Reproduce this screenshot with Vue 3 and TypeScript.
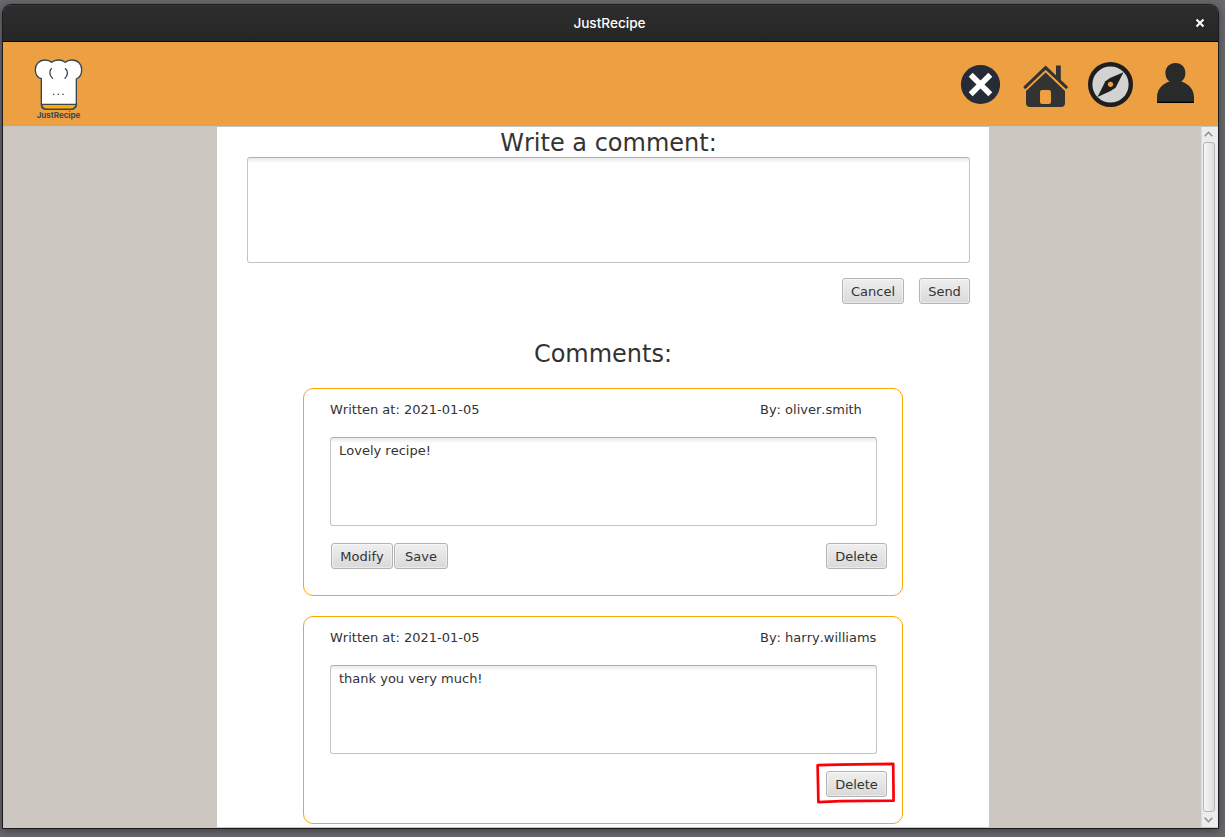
<script setup lang="ts">
interface Comment {
  id: number
  date: string
  author: string
  text: string
  editable: boolean
  marked: boolean
}

const comments: Comment[] = [
  { id: 1, date: '2021-01-05', author: 'oliver.smith', text: 'Lovely recipe!', editable: true, marked: false },
  { id: 2, date: '2021-01-05', author: 'harry.williams', text: 'thank you very much!', editable: false, marked: true },
]
</script>

<template>
  <div class="desktop">
    <div class="window">
      <div class="titlebar">
        <span class="title">JustRecipe</span>
        <svg class="close" width="10" height="10" viewBox="0 0 10 10">
          <path d="M1.5 1.5 8.5 8.5M8.5 1.5 1.5 8.5" stroke="#fff" stroke-width="2" />
        </svg>
      </div>

      <header class="toolbar">
        <svg class="logo" width="54" height="64" viewBox="36 21 162 192">
          <path
            d="M64 86C52 83 46 74 46 59C46 42 58 30 74 30C82 30 90 32 95 37C101 31 108 30 115 30C123 30 130 32 136 37C142 31 149 30 156 30C174 30 185 42 185 59C185 74 178 83 169 87V164C169 172 162 178 153 178H80C70 178 64 172 64 164Z"
            fill="#fff" stroke="#37474f" stroke-width="4" />
          <path d="M65 163H168C167 172 161 177 153 177H80C71 177 66 172 65 163Z" fill="#ffab00" stroke="#37474f" stroke-width="3.4" />
          <path d="M95 55C87 62 87 77 99 86M135 55C145 62 145 76 134 86" fill="none" stroke="#37474f" stroke-width="4" />
          <path d="M99 133h4M113 133h4M127 133h4" stroke="#37474f" stroke-width="4" />
          <text x="50" y="205" textLength="131" lengthAdjust="spacingAndGlyphs" class="logo-text">JustRecipe</text>
        </svg>
        <nav class="icons">
          <svg width="45" height="45" viewBox="0 0 45 45">
            <circle cx="22.5" cy="22.5" r="19.6" fill="#262b38" />
            <path d="M12.7 12.7 32.3 32.3M32.3 12.7 12.7 32.3" stroke="#fff" stroke-width="5.6" />
          </svg>
          <svg width="45" height="45" viewBox="0 0 45 45">
            <path d="M33 3.5h4.8V20L33 15.5Z" fill="#333" />
            <path d="M2.2 25.2 22.6 5.6 43.2 25.2" fill="none" stroke="#333" stroke-width="3.1" stroke-linecap="round" />
            <path
              fill-rule="evenodd"
              d="M22.6 10.5 42 29V41Q42 45 38 45H7Q3 45 3 41V29ZM19 28Q17 28 17 30V40Q17 42 19 42H26Q28 42 28 40V30Q28 28 26 28Z"
              fill="#333" />
          </svg>
          <svg width="45" height="45" viewBox="0 0 45 45">
            <circle cx="22.5" cy="22.5" r="20.3" fill="#d2d2d2" stroke="#1e1e1e" stroke-width="4.4" />
            <path d="M35.5 10.2 27.6 25.8 22.5 29 9.5 35 17.4 19.2 22 16Z" fill="#1e1e1e" />
            <circle cx="22.5" cy="22.3" r="2.6" fill="#eda041" />
          </svg>
          <svg width="45" height="45" viewBox="0 0 45 45">
            <path
              d="M22.4 1.1C28.5 1.1 32.4 5.4 32.4 11C32.4 14.7 30.8 17.8 28.3 19.6C36 22 41 27.8 41 35.5V41H4V35.5C4 27.8 9 22 16.5 19.6C14 17.8 12.4 14.7 12.4 11C12.4 5.4 16.5 1.1 22.4 1.1Z"
              fill="#2a2a2a" />
            <path d="M4 40.4H41" stroke="#000" stroke-width="1.2" />
          </svg>
        </nav>
      </header>

      <div class="scroller">
        <div class="viewport">
          <main class="page">
            <h1 class="heading">Write a comment:</h1>
            <div class="field new-comment"></div>
            <div class="actions">
              <button class="btn cancel">Cancel</button>
              <button class="btn send">Send</button>
            </div>

            <h2 class="heading list-heading">Comments:</h2>
            <section class="list">
              <article v-for="c in comments" :key="c.id" class="card">
                <div class="meta">
                  <span class="date">Written at: {{ c.date }}</span>
                  <span>By: {{ c.author }}</span>
                </div>
                <div class="field comment-text">{{ c.text }}</div>
                <div class="card-actions">
                  <template v-if="c.editable">
                    <button class="btn modify">Modify</button>
                    <button class="btn save">Save</button>
                  </template>
                  <div class="delete-wrap">
                    <button class="btn delete">Delete</button>
                    <svg v-if="c.marked" class="marker" width="80" height="42" viewBox="0 0 80 42">
                      <path d="M1.8 3.2 24 2.7 77.2 1.8 77.6 38.7 25 39.2 2.4 40.2 1.6 2.2" fill="none" stroke="#fb0007" stroke-width="2.7" stroke-linejoin="round" />
                    </svg>
                  </div>
                </div>
              </article>
            </section>
          </main>
        </div>
        <div class="scrollbar">
          <svg width="9" height="6" viewBox="0 0 9 6"><path d="M.7 5.2 4.5 1.2 8.3 5.2" fill="none" stroke="#8a8a8a" stroke-width="1.4" /></svg>
          <div class="thumb"></div>
          <svg width="9" height="6" viewBox="0 0 9 6"><path d="M.7.8 4.5 4.8 8.3.8" fill="none" stroke="#8a8a8a" stroke-width="1.4" /></svg>
        </div>
      </div>
    </div>
  </div>
</template>

<style>
body {
  margin: 0;
  overflow: hidden;
}
</style>

<style scoped>
* {
  box-sizing: border-box;
}
.desktop {
  width: 1225px;
  height: 837px;
  padding: 4px 6px 8px 2px;
  background: #69686d;
  overflow: hidden;
}
.window {
  display: flex;
  flex-direction: column;
  width: 1217px;
  height: 825px;
  border: 1px solid #1b1b1b;
  border-radius: 9px 9px 0 0;
  overflow: hidden;
  box-shadow: 0 2px 8px rgba(0, 0, 0, 0.4);
  font-family: "DejaVu Sans", sans-serif;
  font-size: 13px;
  font-kerning: none;
  color: #333;
}
.titlebar {
  display: flex;
  align-items: center;
  flex: none;
  height: 37px;
  padding: 0 13px 2px 23px;
  background: linear-gradient(#2d2d2d, #262626);
  border-top: 1px solid #383838;
  border-bottom: 1px solid #080808;
}
.title {
  flex: 1;
  text-align: center;
  color: #fff;
  font: 500 13.6px/18px Inter, sans-serif;
  padding-right: 2px;
}
.toolbar {
  display: flex;
  justify-content: space-between;
  flex: none;
  height: 84px;
  padding: 15px 20px 0 29px;
  background: #eda041;
}
.logo-text {
  font: 700 22px Inter, sans-serif;
  fill: #37474f;
}
.icons {
  display: flex;
  gap: 20px;
  padding-top: 5px;
}
.scroller {
  display: flex;
  flex: 1;
  min-height: 0;
  border-top: 1px solid #c4c4c4;
  border-bottom: 1px solid #c8c8c4;
}
.viewport {
  flex: 1;
  background: #cdc7c2;
  padding-left: 214px;
}
.page {
  display: flex;
  flex-direction: column;
  width: 772px;
  height: 700px;
  padding: 0 19px 0 30px;
  background: #fff;
}
.heading {
  margin: 0;
  height: 30px;
  font-size: 24px;
  font-weight: 400;
  line-height: 33px;
  text-align: center;
}
.field {
  border: 1px solid #c4c4c4;
  border-top-color: #b0b0b0;
  border-radius: 3px;
  background: linear-gradient(#e9e9e9, #fff 5px);
}
.new-comment {
  flex: none;
  height: 106px;
}
.actions {
  display: flex;
  justify-content: flex-end;
  gap: 15px;
  padding-top: 15px;
}
.btn {
  height: 26px;
  padding: 2px 0 0;
  border: 1px solid #b4b4b4;
  border-radius: 3px;
  background: linear-gradient(#efefef, #d9d9d9);
  box-shadow: inset 0 0 0 1px rgba(255, 255, 255, 0.45);
  color: #333;
  font: 13px/22px "DejaVu Sans", sans-serif;
  font-kerning: none;
}
.cancel,
.modify {
  width: 62px;
}
.send {
  width: 51px;
}
.save {
  width: 54px;
  margin-left: 1px;
}
.delete {
  width: 61px;
}
.list-heading {
  width: 600px;
  margin: 34px 0 0 56px;
}
.list {
  display: flex;
  flex-direction: column;
  gap: 20px;
  padding: 20px 0 0 56px;
}
.card {
  width: 600px;
  height: 208px;
  padding: 12px 15px 0 26px;
  border: 1px solid #ffa500;
  border-radius: 10px;
}
.meta {
  display: flex;
  line-height: 18px;
}
.date {
  width: 430px;
}
.comment-text {
  width: 547px;
  height: 89px;
  margin-top: 18px;
  padding: 4px 8px;
  line-height: 18px;
}
.card-actions {
  display: flex;
  padding: 17px 0 0 1px;
}
.delete-wrap {
  position: relative;
  margin-left: auto;
}
.marker {
  position: absolute;
  left: -10px;
  top: -9px;
}
.scrollbar {
  display: flex;
  flex-direction: column;
  align-items: center;
  gap: 5px;
  width: 17px;
  padding: 4px 3px 4px 0;
  border-left: 1px solid #dcdcdc;
  background: #ececec;
}
.scrollbar svg {
  flex: none;
}
.thumb {
  flex: 1;
  width: 12px;
  border: 1px solid #b4b4b4;
  border-radius: 3px;
  background: linear-gradient(90deg, #f6f6f6, #dedede);
}
</style>
